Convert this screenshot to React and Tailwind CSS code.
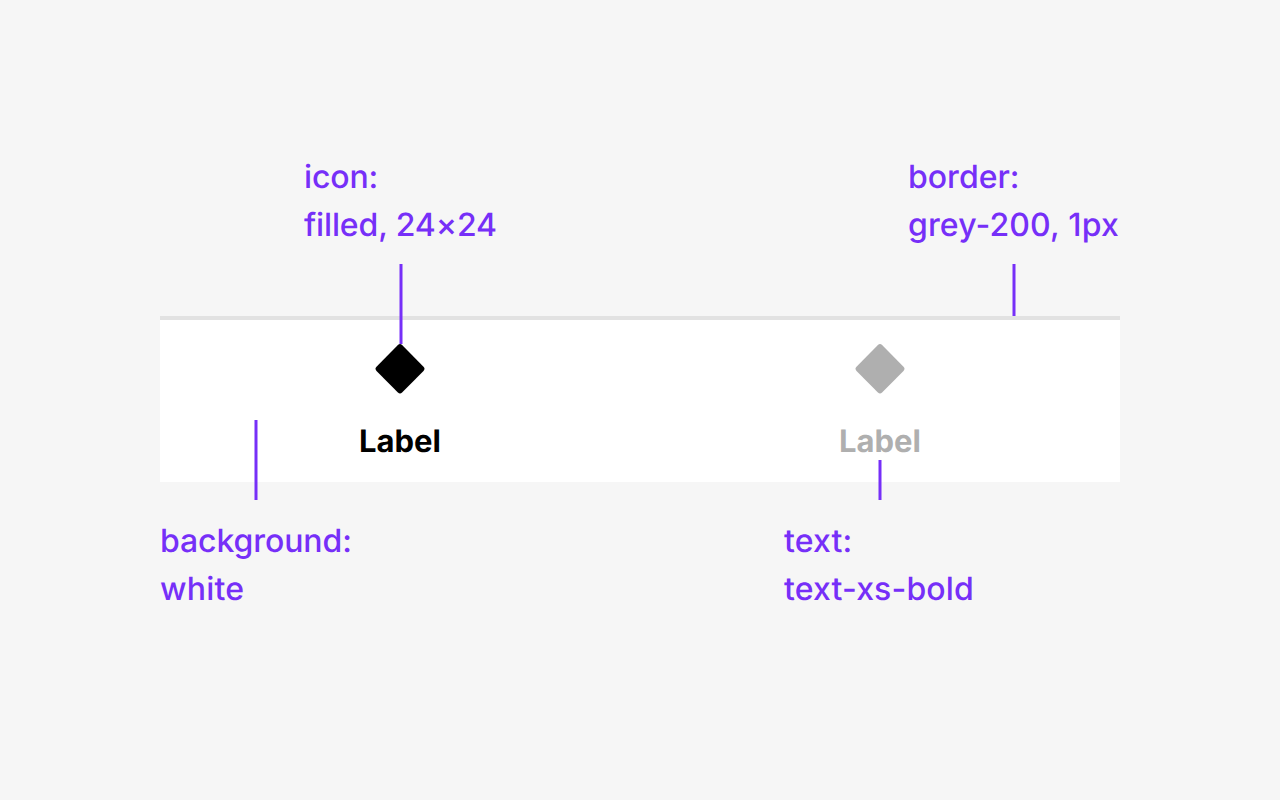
import React from "react";

const leaders = [
  { x: 401, y1: 264, y2: 344 },
  { x: 1014, y1: 264, y2: 316 },
  { x: 256, y1: 420, y2: 500 },
  { x: 880, y1: 460, y2: 500 },
];

function Note({ name, value, className, valueClass = "" }) {
  return (
    <div className={`whitespace-nowrap ${className}`}>
      <p>{name}:</p>
      <p className={valueClass}>{value}</p>
    </div>
  );
}

function Tab({ label, className }) {
  return (
    <div className={`flex flex-1 flex-col items-center ${className}`}>
      <svg
        className="h-[50px] w-[50px]"
        viewBox="0 0 50 50"
        fill="currentColor"
      >
        <path d="M22.9 1.1a3 3 0 0 1 4.2 0L48.5 22.7a3 3 0 0 1 0 4.2L27.1 48.5a3 3 0 0 1-4.2 0L1.5 26.9a3 3 0 0 1 0-4.2z" />
      </svg>
      <span className="mt-6 text-[31px] leading-[48px] font-bold">{label}</span>
    </div>
  );
}

export default function App() {
  return (
    <div className="relative flex h-[800px] w-[1280px] flex-col overflow-hidden bg-[#f6f6f6] px-40 pt-[153px] font-['Inter',sans-serif] [font-optical-sizing:none] [text-rendering:geometricPrecision]">
      <div className="flex h-[163px] text-[32px] leading-[48px] font-medium text-[#762ff8]">
        <Note
          name="icon"
          value="filled, 24×24"
          className="ml-36 w-[604px] tracking-[-0.14px]"
        />
        <Note
          name="border"
          value="grey-200, 1px"
          valueClass="tracking-[0.14px]"
        />
      </div>

      {/* Tab bar */}
      <div className="flex h-[166px] shrink-0 border-t-4 border-[#e2e2e2] bg-white pt-6">
        <Tab label="Label" className="text-black" />
        <Tab label="Label" className="text-[#afafaf]" />
      </div>

      <div className="flex pt-[35px] text-[32px] leading-[48px] font-medium text-[#762ff8]">
        <Note
          name="background"
          value="white"
          className="w-[624px] tracking-[-0.1px]"
          valueClass="tracking-[0.2px]"
        />
        <Note
          name="text"
          value="text-xs-bold"
          className="tracking-[0.14px]"
        />
      </div>

      {/* Leader lines */}
      <svg
        className="pointer-events-none absolute inset-0 h-full w-full"
        viewBox="0 0 1280 800"
        stroke="#762ff8"
        strokeWidth="3"
      >
        {leaders.map((l) => (
          <line key={l.x} x1={l.x} x2={l.x} y1={l.y1} y2={l.y2} />
        ))}
      </svg>
    </div>
  );
}
